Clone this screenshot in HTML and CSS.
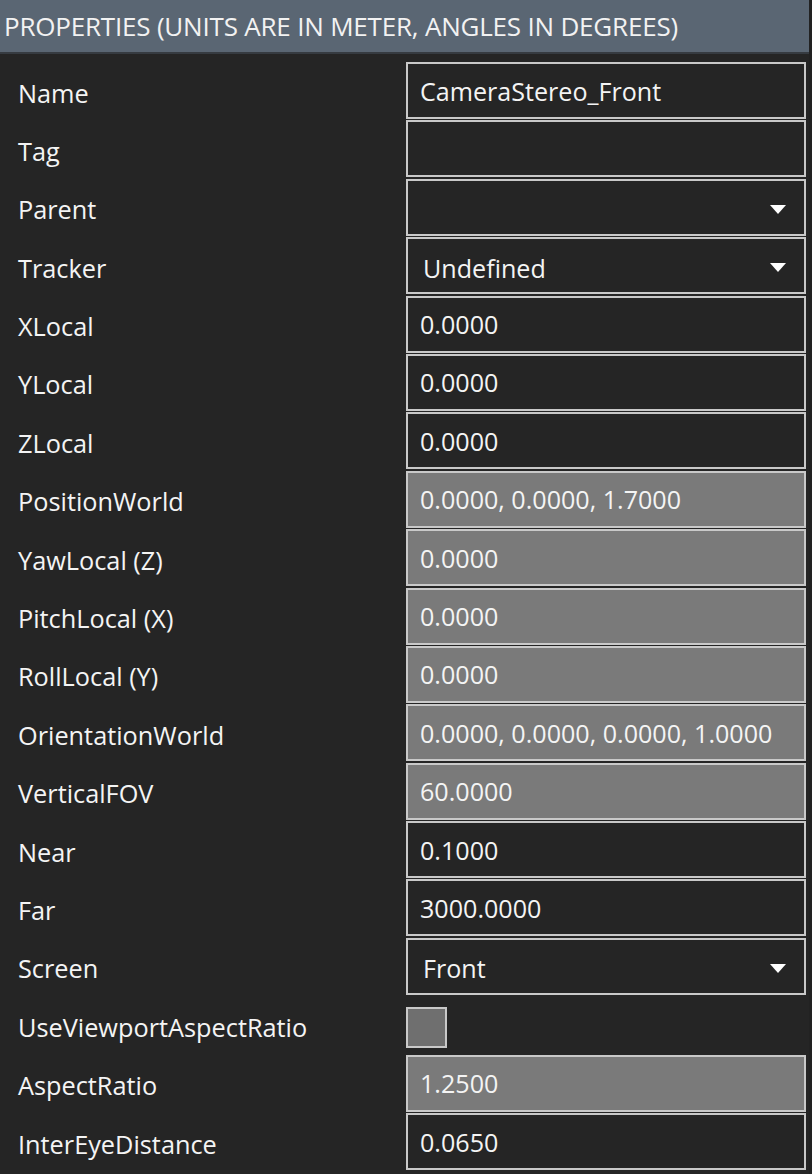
FILE: index.html
```html
<!DOCTYPE html>
<html>
<head>
<meta charset="utf-8">
<link rel="stylesheet" href="styles.css">
</head>
<body>
<div class="panel">
  <div class="header"><span class="header-text">PROPERTIES (UNITS ARE IN METER, ANGLES IN DEGREES)</span></div>
  <div class="grid">
    <div class="label">Name</div><div class="box">CameraStereo_Front</div>
    <div class="label">Tag</div><div class="box"></div>
    <div class="label">Parent</div><div class="box select"><span class="val"></span><span class="arrow"></span></div>
    <div class="label">Tracker</div><div class="box select"><span class="val">Undefined</span><span class="arrow"></span></div>
    <div class="label">XLocal</div><div class="box">0.0000</div>
    <div class="label">YLocal</div><div class="box">0.0000</div>
    <div class="label">ZLocal</div><div class="box">0.0000</div>
    <div class="label">PositionWorld</div><div class="box ro">0.0000, 0.0000, 1.7000</div>
    <div class="label">YawLocal (Z)</div><div class="box ro">0.0000</div>
    <div class="label">PitchLocal (X)</div><div class="box ro">0.0000</div>
    <div class="label">RollLocal (Y)</div><div class="box ro">0.0000</div>
    <div class="label">OrientationWorld</div><div class="box ro">0.0000, 0.0000, 0.0000, 1.0000</div>
    <div class="label">VerticalFOV</div><div class="box ro">60.0000</div>
    <div class="label">Near</div><div class="box">0.1000</div>
    <div class="label">Far</div><div class="box">3000.0000</div>
    <div class="label">Screen</div><div class="box select"><span class="val">Front</span><span class="arrow"></span></div>
    <div class="label">UseViewportAspectRatio</div><div class="check-cell"><span class="check"></span></div>
    <div class="label">AspectRatio</div><div class="box ro">1.2500</div>
    <div class="label">InterEyeDistance</div><div class="box">0.0650</div>
  </div>
</div>
</body>
</html>
```
FILE: styles.css
```css
html, body {
  margin: 0;
  padding: 0;
  background: #252525;
  width: 812px;
  height: 1174px;
  overflow: hidden;
}
.panel {
  font-family: "Open Sans", "Noto Sans", sans-serif;
  color: #f4f4f4;
  border-right: 3px solid #222222;
  height: 1174px;
  box-sizing: border-box;
}
.header {
  height: 52px;
  background: #5a6673;
  border-bottom: 2px solid #363b41;
  display: flex;
  align-items: center;
  padding-left: 4px;
  overflow: hidden;
  white-space: nowrap;
}
.header-text {
  display: inline-block;
  font-size: 26px;
  letter-spacing: -0.2px;
  color: #f2f2f2;
}
.grid {
  display: grid;
  grid-template-columns: 406px 400px;
  grid-auto-rows: 57px;
  row-gap: 1.4px;
  padding-top: 8px;
}
.label {
  font-size: 25.3px;
  padding-left: 18px;
  display: flex;
  align-items: center;
  padding-top: 4px;
  white-space: nowrap;
}
.box {
  box-sizing: border-box;
  border: 2px solid #c9c9c9;
  background: #252525;
  font-size: 25.1px;
  padding-left: 12px;
  padding-right: 18px;
  display: flex;
  align-items: center;
  white-space: nowrap;
}
.box.ro {
  background: #7a7a7a;
}
.select {
  justify-content: space-between;
}
.select .val {
  padding-left: 3px;
  padding-top: 4px;
}
.arrow {
  width: 0;
  height: 0;
  border-left: 8px solid transparent;
  border-right: 8px solid transparent;
  border-top: 9px solid #ffffff;
  margin-top: 4px;
}
.check-cell {
  display: flex;
  align-items: flex-start;
}
.check {
  margin-top: 11px;
  width: 41px;
  height: 41px;
  box-sizing: border-box;
  border: 2px solid #c9c9c9;
  background: #6f6f6f;
}
```
